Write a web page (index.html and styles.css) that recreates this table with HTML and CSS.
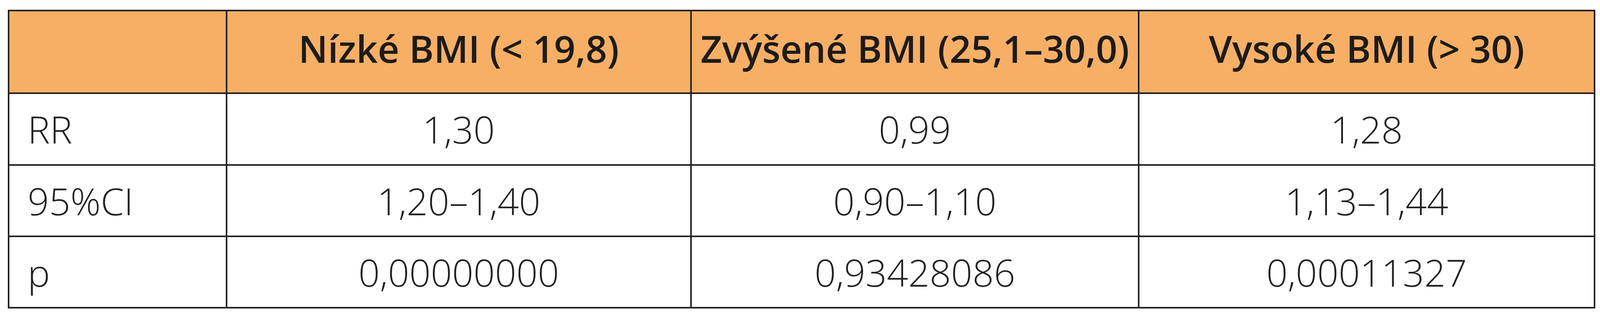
FILE: index.html
```html
<!DOCTYPE html>
<html lang="cs">
<head>
<meta charset="utf-8">
<title>BMI</title>
<link rel="stylesheet" href="styles.css">
</head>
<body>
<div class="tbl" role="table">
  <div class="cell head first" role="columnheader"></div>
  <div class="cell head" role="columnheader">Nízké BMI (&lt; 19,8)</div>
  <div class="cell head" role="columnheader">Zvýšené BMI (25,1–30,0)</div>
  <div class="cell head" role="columnheader">Vysoké BMI (&gt; 30)</div>

  <div class="cell first" role="rowheader">RR</div>
  <div class="cell" role="cell">1,30</div>
  <div class="cell" role="cell">0,99</div>
  <div class="cell" role="cell">1,28</div>

  <div class="cell first" role="rowheader">95%CI</div>
  <div class="cell" role="cell">1,20–1,40</div>
  <div class="cell" role="cell">0,90–1,10</div>
  <div class="cell" role="cell">1,13–1,44</div>

  <div class="cell first" role="rowheader">p</div>
  <div class="cell" role="cell">0,00000000</div>
  <div class="cell" role="cell">0,93428086</div>
  <div class="cell" role="cell">0,00011327</div>
</div>
</body>
</html>
```

FILE: styles.css
```css
html, body {
  margin: 0;
  padding: 0;
  background: #ffffff;
}

body {
  padding-top: 25px;
  font-family: "Open Sans", "Noto Sans", "DejaVu Sans", sans-serif;
  color: #231f20;
}

.tbl {
  display: grid;
  grid-template-columns: 792fr 1691fr 1629fr 1659fr;
  grid-template-rows: 212px 184px 183px 183px;
  box-sizing: border-box;
  width: 99.21%;
  margin-left: 0.5%;
  border-top: 4px solid #231f20;
  border-left: 4px solid #231f20;
}

.cell {
  box-sizing: border-box;
  min-width: 0;
  display: flex;
  align-items: center;
  justify-content: center;
  border-right: 4px solid #231f20;
  border-bottom: 4px solid #231f20;
  font-size: 96px;
  line-height: 1;
  font-weight: 300;
  white-space: nowrap;
}

.cell.first {
  justify-content: flex-start;
  padding-left: 8.3%;
}

.cell.head {
  background: #f7af66;
  font-weight: 600;
  color: #1d1b1a;
  padding-bottom: 18px;
}
```
